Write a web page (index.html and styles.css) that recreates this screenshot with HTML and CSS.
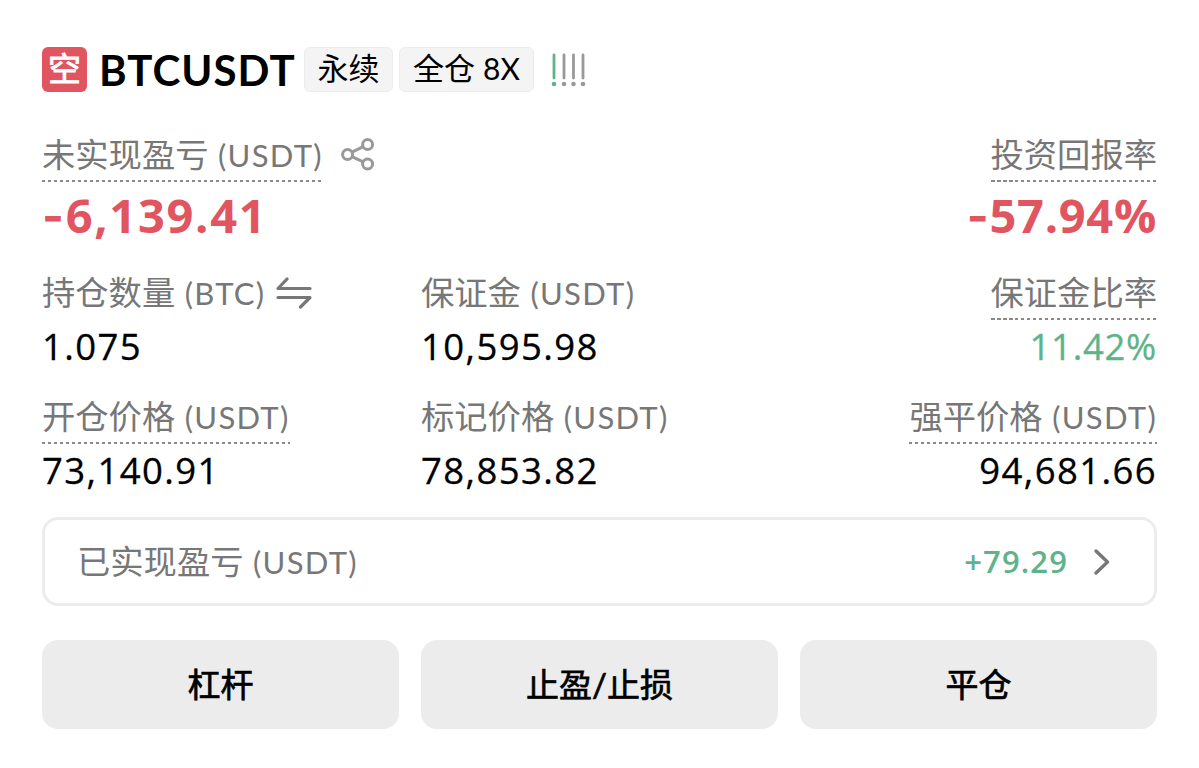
FILE: index.html
```html
<!DOCTYPE html>
<html lang="zh-CN">
<head>
  <meta charset="UTF-8" />
  <meta name="viewport" content="width=device-width, initial-scale=1.0" />
  <title>BTCUSDT 永续</title>
  <link rel="stylesheet" href="styles.css">
</head>
<body>
  <div class="position">
    <div class="header">
      <span class="side">空</span>
      <h1>BTCUSDT</h1>
      <span class="tag">永续</span>
      <span class="tag tag-wide">全仓 <span class="lever">8X</span></span>
      <svg class="risk" width="36" height="36" viewBox="0 0 36 36">
        <g stroke-width="2.8" stroke-linecap="round">
          <path d="M3 3v23" stroke="#5fb38a" />
          <path d="M13 3v23M22.5 3v23M32 3v23" stroke="#999" />
        </g>
        <g fill="#999">
          <circle cx="3" cy="32" r="2.300" fill="#5fb38a" />
          <circle cx="13" cy="32" r="2.300" />
          <circle cx="22.5" cy="32" r="2.300" />
          <circle cx="32" cy="32" r="2.300" />
        </g>
      </svg>
    </div>

    <div class="grid pnl">
      <div class="cell">
        <div class="label-row">
          <span class="label dashed">未实现盈亏 <span class="unit">(USDT)</span></span>
          <svg class="share" width="34" height="34" viewBox="0 0 34 34" fill="none" stroke="#999" stroke-width="3">
            <circle cx="6.6" cy="16.500" r="5" />
            <circle cx="26.6" cy="6.500" r="5" />
            <circle cx="26.6" cy="26" r="5" />
            <path d="M11 14.2l11.2-5.500M11 18.7l11.2 5.1" />
          </svg>
        </div>
        <div class="value big red"><span class="minus">-</span>6,139.41</div>
      </div>
      <div class="cell right last">
        <div class="label-row"><span class="label dashed">投资回报率</span></div>
        <div class="value big red roi"><span class="minus">-</span>57.94%</div>
      </div>
    </div>

    <div class="grid">
      <div class="cell">
        <div class="label-row">
          <span class="label">持仓数量 <span class="unit">(BTC)</span></span>
          <svg class="swap" width="36" height="32" viewBox="0 0 36 32" fill="none" stroke="#777" stroke-width="3.2" stroke-linecap="round" stroke-linejoin="round">
            <path d="M34 11.5H2L11 2M2 20.5h32L24.500 30" />
          </svg>
        </div>
        <div class="value">1.075</div>
      </div>
      <div class="cell">
        <div class="label-row"><span class="label">保证金 <span class="unit">(USDT)</span></span></div>
        <div class="value">10,595.98</div>
      </div>
      <div class="cell right">
        <div class="label-row"><span class="label dashed">保证金比率</span></div>
        <div class="value green ratio">11.42%</div>
      </div>
    </div>

    <div class="grid">
      <div class="cell">
        <div class="label-row"><span class="label dashed">开仓价格 <span class="unit">(USDT)</span></span></div>
        <div class="value">73,140.91</div>
      </div>
      <div class="cell">
        <div class="label-row"><span class="label">标记价格 <span class="unit">(USDT)</span></span></div>
        <div class="value">78,853.82</div>
      </div>
      <div class="cell right">
        <div class="label-row"><span class="label dashed">强平价格 <span class="unit">(USDT)</span></span></div>
        <div class="value">94,681.66</div>
      </div>
    </div>

    <div class="realized">
      <span class="label">已实现盈亏 <span class="unit">(USDT)</span></span>
      <span class="realized-value">+79.29</span>
      <svg class="chevron" width="18" height="28" viewBox="0 0 18 28" fill="none" stroke="#777" stroke-width="3.4" stroke-linecap="round" stroke-linejoin="round">
        <path d="M3 3l11.500 11L3 25" />
      </svg>
    </div>

    <div class="actions">
      <button>杠杆</button>
      <button>止盈/止损</button>
      <button>平仓</button>
    </div>
  </div>
</body>
</html>
```
FILE: styles.css
```css
* { box-sizing: border-box; }
body {
  margin: 0;
  background: #fff;
  color: #000;
  font-family: Lato, "Noto Sans CJK SC", sans-serif;
}
.position {
  padding: 47px 42px 0;
}
.header {
  display: flex;
  align-items: center;
  height: 45px;
  margin-bottom: 43px;
}
.side {
  width: 45px;
  height: 45px;
  border-radius: 6px;
  background: #e15561;
  color: #fff;
  font-size: 33px;
  line-height: 43px;
  text-align: center;
  -webkit-text-stroke: 0.8px #fff;
}
h1 {
  width: 197px;
  margin: 0 8px 0 12px;
  font-size: 42px;
  font-weight: 700;
  line-height: 48px;
  letter-spacing: 1px;
  white-space: nowrap;
}
.tag {
  width: 89px;
  height: 45px;
  margin-right: 6px;
  border: 1px solid #ececec;
  border-radius: 6px;
  background: #f4f4f4;
  font-size: 31px;
  line-height: 41px;
  text-align: center;
  white-space: nowrap;
}
.tag-wide { width: 135px; }
.lever { font-size: 30px; }
.risk { margin-left: 11px; }

.grid {
  display: grid;
  grid-template-columns: repeat(3, 1fr);
  column-gap: 22px;
  height: 124px;
}
.pnl { height: 138px; }
.last { grid-column: 3; }
.label-row {
  display: flex;
  align-items: flex-start;
  height: 47px;
}
.right .label-row { justify-content: flex-end; }
.right .value { text-align: right; }
.label {
  height: 47px;
  color: #777;
  font-size: 33.3px;
  line-height: 38px;
  white-space: nowrap;
}
.unit {
  margin-left: 1px;
  font-size: 31px;
  letter-spacing: 1.3px;
}
.dashed {
  background: repeating-linear-gradient(to right, #888 0 3.5px, transparent 3.5px 6px) left bottom / 100% 2px no-repeat;
}
.share { margin: 3px 0 0 18px; }
.swap { margin: 4px 0 0 11px; }
.value {
  font-family: "Open Sans", sans-serif;
  font-size: 36.5px;
  line-height: 52px;
  letter-spacing: 1.4px;
  white-space: nowrap;
  -webkit-text-stroke: 0.3px;
}
.ratio { letter-spacing: 0.7px; }
.big {
  font-size: 47px;
  font-weight: 700;
  line-height: 67px;
  letter-spacing: 1.7px;
  -webkit-text-stroke: 0;
}
.roi { letter-spacing: 0.7px; }
.minus { font-family: Inter, sans-serif; }
.red { color: #e15561; }
.green { color: #5fb38a; }

.realized {
  display: flex;
  align-items: center;
  height: 89px;
  margin-top: -4px;
  padding: 0 43px 0 32px;
  border: 3px solid #ececec;
  border-radius: 16px;
}
.realized .label {
  height: auto;
  padding-bottom: 1px;
}
.realized-value {
  margin-left: auto;
  padding-bottom: 1px;
  color: #5fb38a;
  font-family: "Open Sans", sans-serif;
  font-size: 31px;
  font-weight: 600;
  letter-spacing: 1.1px;
}
.chevron { margin-left: 25px; }

.actions {
  display: grid;
  grid-template-columns: repeat(3, 1fr);
  gap: 22px;
  margin-top: 34px;
}
button {
  height: 89px;
  padding: 0 0 4px;
  border: none;
  border-radius: 16px;
  background: #ececec;
  color: #000;
  font-family: inherit;
  font-size: 33px;
  -webkit-text-stroke: 0.7px #000;
}
```
